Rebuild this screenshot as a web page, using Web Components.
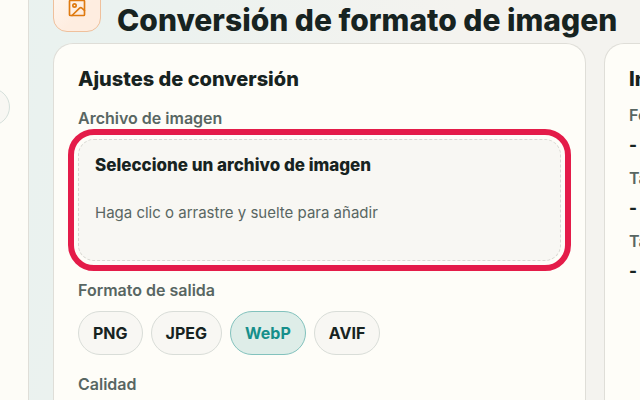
<!doctype html>
<html lang="es">
<head>

  <meta charset="utf-8">
  <title>Conversión de formato de imagen</title>

  <style>
    html, body {
      height: 100%;
    }

    body {
      --ink: #172321;
      --muted: #586662;
      --line: #dfded8;
      --surface: #fefdf8;
      --soft: #f8f7f3;
      --accent: #168f8b;
      margin: 0;
      overflow: hidden;
      color: var(--ink);
      font-family: Inter, "Liberation Sans", sans-serif;
    }
  </style>

  <template id="image-app-template">
    <style>
      :host {
        display: flex;
        height: 100%;
        background: linear-gradient(100deg, #e9f2ef 0%, #ecf2ef 25%, #f4f3ef 65%, #f4f3ef 100%);
      }

      nav {
        display: flex;
        flex: none;
        justify-content: flex-end;
        align-items: flex-start;
        box-sizing: border-box;
        width: 29px;
        padding: 88px 18px 0 0;
        overflow: hidden;
        border-right: 1px solid var(--line);
        background: #fdfcf7;
      }

      nav button {
        flex: none;
        width: 120px;
        height: 38px;
        border: 1px solid #d5e0db;
        border-radius: 19px;
        background: var(--soft);
      }

      main {
        flex: 1;
        min-width: 0;
        padding-left: 24px;
      }

      header {
        display: flex;
        align-items: flex-end;
        gap: 16px;
        height: 43px;
      }

      .tile {
        display: flex;
        flex: none;
        align-items: center;
        justify-content: center;
        box-sizing: border-box;
        width: 48px;
        height: 48px;
        margin-bottom: 11px;
        border: 1px solid #efc09c;
        border-radius: 14px;
        background: linear-gradient(135deg, #fff8f1, #feede0 60%);
      }

      h1 {
        margin: 0 0 4px;
        font-size: 30px;
        line-height: 38px;
        font-weight: 800;
        white-space: nowrap;
      }

      .columns {
        display: grid;
        grid-template-columns: minmax(0, 1fr) 36px;
        gap: 18px;
        height: calc(100% - 43px);
      }

      .results {
        width: 320px;
      }

      .fields {
        padding-top: 3px;
      }

      dl {
        margin: 0;
      }

      dt {
        color: var(--muted);
        font-size: 16px;
        line-height: 26px;
        font-weight: 600;
      }

      dd {
        margin: 0 0 3px;
        font-size: 17px;
        line-height: 34px;
        font-weight: 800;
      }

      .formats {
        display: flex;
        gap: 8px;
      }
    </style>
    <nav><button type="button" aria-label="Menú"></button></nav>
    <main>
      <header>
        <span class="tile">
          <svg width="20" height="20" viewBox="0 0 24 24" fill="none" stroke="#df7a10" stroke-width="2" stroke-linecap="round" stroke-linejoin="round">
            <rect x="3" y="3" width="18" height="18" rx="1"/>
            <circle cx="9" cy="9" r="2"/>
            <path d="M6 21L15.1 12.1a2 2 0 0 1 2.8 0L21 15"/>
          </svg>
        </span>
        <h1>Conversión de formato de imagen</h1>
      </header>
      <div class="columns">
        <image-panel heading="Ajustes de conversión">
          <div class="fields">
            <form-field label="Archivo de imagen">
              <file-drop></file-drop>
            </form-field>
            <form-field label="Formato de salida">
              <div class="formats">
                <format-chip>PNG</format-chip>
                <format-chip>JPEG</format-chip>
                <format-chip selected>WebP</format-chip>
                <format-chip>AVIF</format-chip>
              </div>
            </form-field>
            <form-field label="Calidad"></form-field>
          </div>
        </image-panel>
        <image-panel class="results" heading="Información">
          <dl>
            <dt>Formato</dt><dd>-</dd>
            <dt>Tamaño original</dt><dd>-</dd>
            <dt>Tamaño convertido</dt><dd>-</dd>
          </dl>
        </image-panel>
      </div>
    </main>
  </template>

  <template id="image-panel-template">
    <style>
      :host {
        display: block;
        box-sizing: border-box;
        padding: 20px 24px 0;
        border: 1px solid var(--line);
        border-bottom: 0;
        border-radius: 20px 20px 0 0;
        background: var(--surface);
      }

      h2 {
        margin: 0 0 8px;
        font-size: 20px;
        line-height: 30px;
        font-weight: 800;
      }
    </style>
    <h2></h2>
    <slot></slot>
  </template>

  <template id="form-field-template">
    <style>
      :host {
        display: block;
      }

      :host(:not(:last-child)) {
        margin-bottom: 16px;
      }

      .label {
        color: var(--muted);
        font-size: 16px;
        line-height: 26px;
        font-weight: 600;
      }

      ::slotted(*) {
        margin-top: 8px;
      }
    </style>
    <div role="group" aria-labelledby="label">
      <div class="label" id="label"></div>
      <slot></slot>
    </div>
  </template>

  <template id="file-drop-template">
    <style>
      :host {
        display: block;
      }

      label {
        display: flex;
        flex-direction: column;
        gap: 24px;
        box-sizing: border-box;
        min-height: 122px;
        padding: 13px 16px;
        border: 1px dashed #d9d9d3;
        border-radius: 16px;
        outline: 6px solid #e41c49;
        outline-offset: 4px;
        background: var(--soft);
        cursor: pointer;
      }

      strong {
        font-size: 17px;
        line-height: 24px;
        font-weight: 800;
      }

      span {
        color: var(--muted);
        font-size: 15px;
        line-height: 24px;
      }
    </style>
    <label>
      <strong>Seleccione un archivo de imagen</strong>
      <span>Haga clic o arrastre y suelte para añadir</span>
      <input type="file" accept="image/*" hidden>
    </label>
  </template>

  <template id="format-chip-template">
    <style>
      :host {
        display: block;
      }

      button {
        height: 44px;
        padding: 0 14px;
        border: 1px solid #d9ddd8;
        border-radius: 22px;
        background: var(--soft);
        color: inherit;
        font: 700 16px/24px Inter, "Liberation Sans", sans-serif;
      }

      button[aria-pressed="true"] {
        border-color: #82c2bd;
        background: #deede8;
        color: var(--accent);
      }
    </style>
    <button type="button"><slot></slot></button>
  </template>

  <script>

    class TemplateElement extends HTMLElement {

      connectedCallback() {
        const template = document.querySelector(`#${this.localName}-template`);
        this.root = this.attachShadow({mode: 'open'});
        this.root.appendChild(document.importNode(template.content, true));
        this.ready();
      }

      ready() {}

    }

    customElements.define('image-panel', class extends TemplateElement {
      ready() {
        this.root.querySelector('h2').textContent = this.getAttribute('heading');
      }
    });

    customElements.define('form-field', class extends TemplateElement {
      ready() {
        this.root.querySelector('.label').textContent = this.getAttribute('label');
      }
    });

    customElements.define('file-drop', class extends TemplateElement {});

    customElements.define('format-chip', class extends TemplateElement {
      ready() {
        const button = this.root.querySelector('button');
        button.setAttribute('aria-pressed', this.hasAttribute('selected'));
      }
    });

    customElements.define('image-app', class extends TemplateElement {});

  </script>

</head>
<body>
  <image-app></image-app>
</body>
</html>
